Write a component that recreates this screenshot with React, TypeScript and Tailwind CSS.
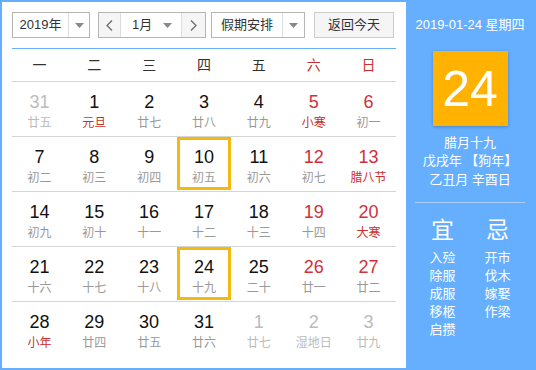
import React from "react";

type Day = { n: number; l: string; other?: boolean; redNum?: boolean; redL?: boolean; sel?: boolean };

const rows: Day[][] = [
  [
    { n: 31, l: "廿五", other: true },
    { n: 1, l: "元旦", redL: true },
    { n: 2, l: "廿七" },
    { n: 3, l: "廿八" },
    { n: 4, l: "廿九" },
    { n: 5, l: "小寒", redNum: true, redL: true },
    { n: 6, l: "初一", redNum: true },
  ],
  [
    { n: 7, l: "初二" },
    { n: 8, l: "初三" },
    { n: 9, l: "初四" },
    { n: 10, l: "初五", sel: true },
    { n: 11, l: "初六" },
    { n: 12, l: "初七", redNum: true },
    { n: 13, l: "腊八节", redNum: true, redL: true },
  ],
  [
    { n: 14, l: "初九" },
    { n: 15, l: "初十" },
    { n: 16, l: "十一" },
    { n: 17, l: "十二" },
    { n: 18, l: "十三" },
    { n: 19, l: "十四", redNum: true },
    { n: 20, l: "大寒", redNum: true, redL: true },
  ],
  [
    { n: 21, l: "十六" },
    { n: 22, l: "十七" },
    { n: 23, l: "十八" },
    { n: 24, l: "十九", sel: true },
    { n: 25, l: "二十" },
    { n: 26, l: "廿一", redNum: true },
    { n: 27, l: "廿二", redNum: true },
  ],
  [
    { n: 28, l: "小年", redL: true },
    { n: 29, l: "廿四" },
    { n: 30, l: "廿五" },
    { n: 31, l: "廿六" },
    { n: 1, l: "廿七", other: true },
    { n: 2, l: "湿地日", other: true },
    { n: 3, l: "廿九", other: true },
  ],
];

const weekdays = ["一", "二", "三", "四", "五", "六", "日"];

const Tri = () => (
  <svg width="9" height="5" viewBox="0 0 9 5">
    <path d="M0 0 L9 0 L4.5 5 Z" fill="#888" />
  </svg>
);

export default function App() {
  const font = { fontFamily: '"Liberation Sans", Arial, "Noto Sans CJK SC", sans-serif' };
  return (
    <div
      className="w-[536px] h-[370px] border-2 border-[#65affe] flex bg-white overflow-hidden"
      style={font}
    >
      {/* Left */}
      <div className="w-[404px] h-full bg-white pl-[10px] pr-[10px] pt-[10px] flex flex-col">
        <div className="flex items-center h-[26px] text-[13px] text-[#333]">
          <div className="w-[78px] h-[26px] border border-[#b5b5b5] flex items-stretch">
            <div className="w-[55px] flex items-center justify-center">2019年</div>
            <div className="flex-1 border-l border-[#ddd] flex items-center justify-center">
              <Tri />
            </div>
          </div>
          <div className="ml-[8px] w-[108px] h-[26px] border border-[#b5b5b5] flex items-stretch">
            <div className="w-[22px] bg-[#f5f5f5] border-r border-[#ddd] flex items-center justify-center text-[#555]">
              <svg width="7" height="11" viewBox="0 0 7 11">
                <path d="M6 0.5 L1 5.5 L6 10.5" stroke="#666" strokeWidth="1.2" fill="none" />
              </svg>
            </div>
            <div className="flex-1 flex items-center pl-[11px]">
              <span>1月</span>
              <span className="ml-[11px] flex items-center">
                <Tri />
              </span>
            </div>
            <div className="w-[24px] bg-[#f5f5f5] border-l border-[#ddd] flex items-center justify-center">
              <svg width="7" height="11" viewBox="0 0 7 11">
                <path d="M1 0.5 L6 5.5 L1 10.5" stroke="#666" strokeWidth="1.2" fill="none" />
              </svg>
            </div>
          </div>
          <div className="ml-[5px] w-[94px] h-[26px] border border-[#b5b5b5] flex items-stretch">
            <div className="w-[70px] flex items-center justify-center">假期安排</div>
            <div className="flex-1 border-l border-[#ddd] flex items-center justify-center">
              <Tri />
            </div>
          </div>
          <div className="ml-[9px] w-[80px] h-[26px] border border-[#ccc] bg-[#f5f5f5] flex items-center justify-center">
            返回今天
          </div>
        </div>
        <div className="mt-[10px] h-px bg-[#65affe]" />
        <div className="grid grid-cols-7 h-[33px] border-b border-[#d5d5d5] items-center text-[14px]">
          {weekdays.map((w, i) => (
            <div key={w} className={`text-center ${i >= 5 ? "text-[#c9302c]" : "text-[#333]"}`}>
              {w}
            </div>
          ))}
        </div>
        {rows.map((row, ri) => (
          <div
            key={ri}
            className={`grid grid-cols-7 h-[55px] ${ri < rows.length - 1 ? "border-b border-[#d5d5d5]" : ""}`}
          >
            {row.map((d, ci) => {
              const numColor = d.other ? "text-[#bbbbbb]" : d.redNum ? "text-[#d0303c]" : "text-[#111]";
              const lColor = d.other ? "text-[#bbbbbb]" : d.redL ? "text-[#c9302c]" : "text-[#999]";
              return (
                <div
                  key={ci}
                  className={`flex flex-col items-center pt-[9px] ${d.sel ? "shadow-[inset_0_0_0_3px_#f5b80f] h-[53px]" : ""}`}
                >
                  <div className={`text-[18px] leading-[22px] ${numColor}`}>{d.n}</div>
                  <div className={`text-[12px] leading-[16px] mt-[2px] ${lColor}`}>{d.l}</div>
                </div>
              );
            })}
          </div>
        ))}
      </div>
      {/* Right */}
      <div className="flex-1 h-full bg-[#65affe] text-white flex flex-col items-center">
        <div className="mt-[14px] text-[13px] leading-[18px]">2019-01-24 星期四</div>
        <div className="mt-[17px] w-[75px] h-[75px] bg-[#ffb200] shadow-[0_1px_3px_rgba(0,0,0,0.25)] flex items-center justify-center text-[50px] leading-none">
          24
        </div>
        <div className="mt-[8px] text-[13px] leading-[18px] text-center">
          <div>腊月十九</div>
          <div>戊戌年 【狗年】</div>
          <div className="mt-[1px]">乙丑月 辛酉日</div>
        </div>
        <div className="mt-[13px] w-[110px] h-px bg-[#a8d0fb]" />
        <div className="mt-[13px] w-[110px] grid grid-cols-2 text-[23px] leading-[28px]">
          <div className="text-center">宜</div>
          <div className="text-center">忌</div>
        </div>
        <div className="mt-[5px] w-[110px] grid grid-cols-2 text-[13px] leading-[18px]">
          <div className="flex flex-col items-center">
            <div>入殓</div>
            <div>除服</div>
            <div>成服</div>
            <div>移柩</div>
            <div>启攒</div>
          </div>
          <div className="flex flex-col items-center">
            <div>开市</div>
            <div>伐木</div>
            <div>嫁娶</div>
            <div>作梁</div>
          </div>
        </div>
      </div>
    </div>
  );
}
